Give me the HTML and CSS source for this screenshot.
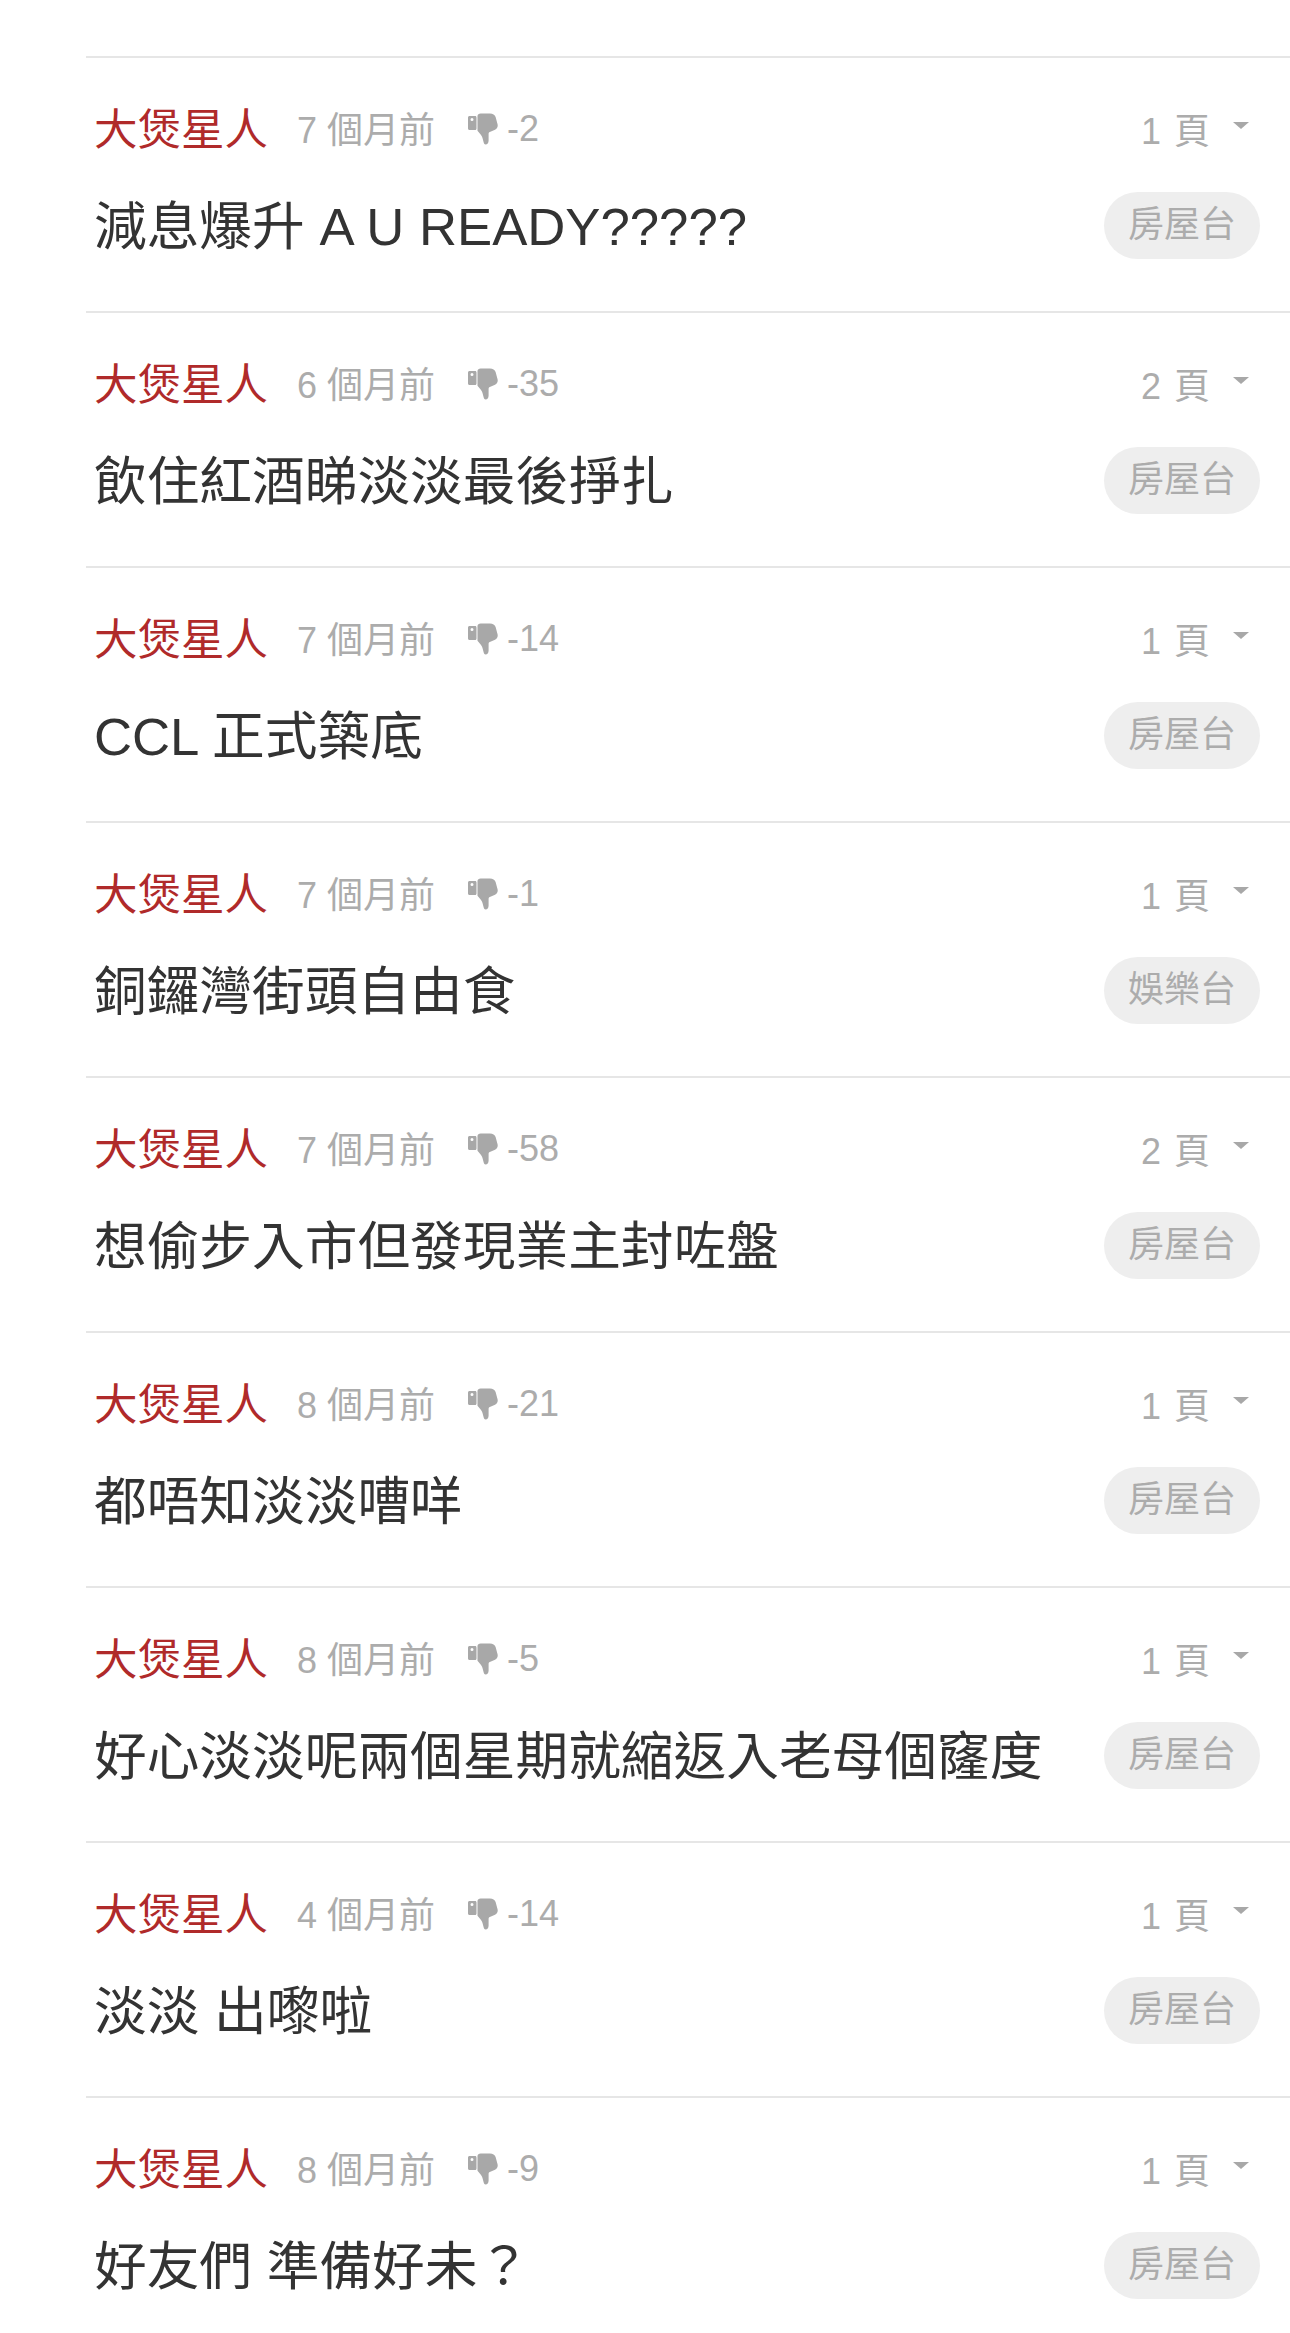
FILE: index.html
```html
<!DOCTYPE html>
<html lang="zh-Hant">
<head>
  <meta charset="UTF-8">
  <meta name="viewport" content="width=device-width, initial-scale=1.0">
  <title>大煲星人</title>
  <link rel="stylesheet" href="styles.css">
</head>
<body>
  <svg class="sprite" width="0" height="0">
    <symbol id="thumbDown" viewBox="0 0 30 32">
      <path d="M0 4.500C0 3.600.7 3 1.500 3h5.700c.8 0 1.300.6 1.300 1.500v11c0 .8-.5 1.500-1.300 1.500H1.500C.7 17 0 16.300 0 15.500zM4 5a1.500 1.500 0 1 0 0 3 1.500 1.500 0 0 0 0-3z" fill-rule="evenodd"/>
      <path d="M9.500 3C9.500 1.500 11 .5 12.500.5h9.500c2.800 0 4.800 1.200 5.600 3.500l1.900 7c.8 2.800-.6 5-3 6l-4.700 2c-.9.400-1.200 1-1.200 2v6.500c0 2.400-1.300 4-3 4-1 0-1.600-.8-1.900-2l-1.200-4.500c-.5-1.800-1.300-3-2.500-4.200l-2.500-3z"/>
    </symbol>
  </svg>
  <ul class="topic-list">
    <li class="topic">
      <div class="topic-meta">
        <a class="author">大煲星人</a><span class="time">7 個月前</span>
        <svg class="thumb"><use href="#thumbDown"/></svg><span class="score">-2</span>
        <span class="pages">1 頁<i class="caret"></i></span>
      </div>
      <div class="topic-main"><a class="topic-title">減息爆升 A U READY?????</a><span class="channel">房屋台</span></div>
    </li>
    <li class="topic">
      <div class="topic-meta">
        <a class="author">大煲星人</a><span class="time">6 個月前</span>
        <svg class="thumb"><use href="#thumbDown"/></svg><span class="score">-35</span>
        <span class="pages">2 頁<i class="caret"></i></span>
      </div>
      <div class="topic-main"><a class="topic-title">飲住紅酒睇淡淡最後掙扎</a><span class="channel">房屋台</span></div>
    </li>
    <li class="topic">
      <div class="topic-meta">
        <a class="author">大煲星人</a><span class="time">7 個月前</span>
        <svg class="thumb"><use href="#thumbDown"/></svg><span class="score">-14</span>
        <span class="pages">1 頁<i class="caret"></i></span>
      </div>
      <div class="topic-main"><a class="topic-title">CCL 正式築底</a><span class="channel">房屋台</span></div>
    </li>
    <li class="topic">
      <div class="topic-meta">
        <a class="author">大煲星人</a><span class="time">7 個月前</span>
        <svg class="thumb"><use href="#thumbDown"/></svg><span class="score">-1</span>
        <span class="pages">1 頁<i class="caret"></i></span>
      </div>
      <div class="topic-main"><a class="topic-title">銅鑼灣街頭自由食</a><span class="channel">娛樂台</span></div>
    </li>
    <li class="topic">
      <div class="topic-meta">
        <a class="author">大煲星人</a><span class="time">7 個月前</span>
        <svg class="thumb"><use href="#thumbDown"/></svg><span class="score">-58</span>
        <span class="pages">2 頁<i class="caret"></i></span>
      </div>
      <div class="topic-main"><a class="topic-title">想偷步入市但發現業主封咗盤</a><span class="channel">房屋台</span></div>
    </li>
    <li class="topic">
      <div class="topic-meta">
        <a class="author">大煲星人</a><span class="time">8 個月前</span>
        <svg class="thumb"><use href="#thumbDown"/></svg><span class="score">-21</span>
        <span class="pages">1 頁<i class="caret"></i></span>
      </div>
      <div class="topic-main"><a class="topic-title">都唔知淡淡嘈咩</a><span class="channel">房屋台</span></div>
    </li>
    <li class="topic">
      <div class="topic-meta">
        <a class="author">大煲星人</a><span class="time">8 個月前</span>
        <svg class="thumb"><use href="#thumbDown"/></svg><span class="score">-5</span>
        <span class="pages">1 頁<i class="caret"></i></span>
      </div>
      <div class="topic-main"><a class="topic-title">好心淡淡呢兩個星期就縮返入老母個窿度</a><span class="channel">房屋台</span></div>
    </li>
    <li class="topic">
      <div class="topic-meta">
        <a class="author">大煲星人</a><span class="time">4 個月前</span>
        <svg class="thumb"><use href="#thumbDown"/></svg><span class="score">-14</span>
        <span class="pages">1 頁<i class="caret"></i></span>
      </div>
      <div class="topic-main"><a class="topic-title">淡淡 出嚟啦</a><span class="channel">房屋台</span></div>
    </li>
    <li class="topic">
      <div class="topic-meta">
        <a class="author">大煲星人</a><span class="time">8 個月前</span>
        <svg class="thumb"><use href="#thumbDown"/></svg><span class="score">-9</span>
        <span class="pages">1 頁<i class="caret"></i></span>
      </div>
      <div class="topic-main"><a class="topic-title">好友們 準備好未？</a><span class="channel">房屋台</span></div>
    </li>
  </ul>
</body>
</html>
```

FILE: styles.css
```css
html, body {
  overflow-x: hidden;
}
body {
  margin: 0;
  height: 2333px;
  overflow: hidden;
  background-color: #FFFFFF;
  font-family: "Liberation Sans", "Noto Sans CJK TC", sans-serif;
}
.sprite {
  display: block;
}
.topic-list {
  list-style: none;
  margin: 0;
  padding: 56px 0 0 86px;
}
.topic {
  height: 255px;
  box-sizing: border-box;
  border-top: 2px solid #e6e6e6;
  padding: 46px 30px 0 8px;
}
.topic-meta {
  display: flex;
  align-items: center;
  height: 50px;
  color: #acacac;
  font-size: 36px;
}
.author {
  color: #b02a2a;
  font-size: 43.5px;
  margin: 0 29px 5px 0;
}
.time {
  margin: 0 0 4px 0;
}
.thumb {
  width: 30px;
  height: 32px;
  margin: 0 9px 0 33px;
  fill: #a8a8a8;
}
.pages {
  display: flex;
  align-items: center;
  margin-left: auto;
  margin-bottom: 3px;
  word-spacing: 3px;
}
.caret {
  width: 0;
  height: 0;
  margin: -5px 11px 0 23px;
  border-left: 8px solid transparent;
  border-right: 8px solid transparent;
  border-top: 7px solid #a8a8a8;
}
.topic-main {
  display: flex;
  align-items: center;
  justify-content: space-between;
  margin-top: 30px;
}
.topic-title {
  color: #333;
  font-size: 52.7px;
  white-space: nowrap;
  margin-bottom: 7px;
}
.channel {
  width: 156px;
  height: 67px;
  line-height: 65px;
  text-align: center;
  border-radius: 34px;
  background-color: #eeeeee;
  color: #acacac;
  font-size: 36px;
}
```
